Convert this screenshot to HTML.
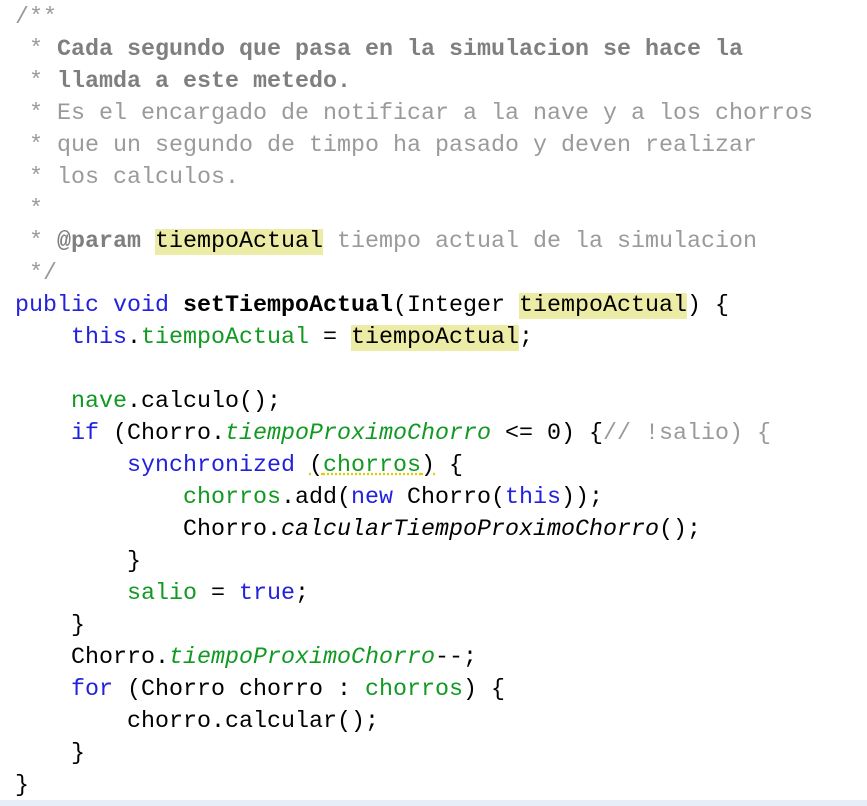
<html><head><style>
body{margin:0;background:#fff;width:867px;height:806px;overflow:hidden;position:relative}
pre{margin:0;padding:2px 0 0 15px;font-family:"Liberation Mono",monospace;font-size:23.33px;line-height:32px;color:#000}
.c{color:#9a9a9a}.cb{color:#7f7f7f;font-weight:bold}
.k{color:#2222dd}.f{color:#119922}.i{font-style:italic}
.h{background:#ececa6}.b{font-weight:bold}
.u{text-decoration:underline dotted #e0d000}
.bar{position:absolute;left:0;top:800px;width:867px;height:6px;background:#e8eef8}
</style></head><body><pre><span class="c">/**
 * <span class="cb">Cada segundo que pasa en la simulacion se hace la</span>
 * <span class="cb">llamda a este metedo.</span>
 * Es el encargado de notificar a la nave y a los chorros
 * que un segundo de timpo ha pasado y deven realizar
 * los calculos.
 *
 * <span class="cb">@param</span> <span class="h" style="color:#000">tiempoActual</span> tiempo actual de la simulacion
 */</span>
<span class="k">public void</span> <span class="b">setTiempoActual</span>(Integer <span class="h">tiempoActual</span>) {
    <span class="k">this</span>.<span class="f">tiempoActual</span> = <span class="h">tiempoActual</span>;

    <span class="f">nave</span>.calculo();
    <span class="k">if</span> (Chorro.<span class="f i">tiempoProximoChorro</span> &lt;= 0) {<span class="c">// !salio) {</span>
        <span class="k">synchronized</span> <span class="u">(<span class="f">chorros</span>)</span> {
            <span class="f">chorros</span>.add(<span class="k">new</span> Chorro(<span class="k">this</span>));
            Chorro.<span class="i">calcularTiempoProximoChorro</span>();
        }
        <span class="f">salio</span> = <span class="k">true</span>;
    }
    Chorro.<span class="f i">tiempoProximoChorro</span>--;
    <span class="k">for</span> (Chorro chorro : <span class="f">chorros</span>) {
        chorro.calcular();
    }
}</pre><div class="bar"></div></body></html>
